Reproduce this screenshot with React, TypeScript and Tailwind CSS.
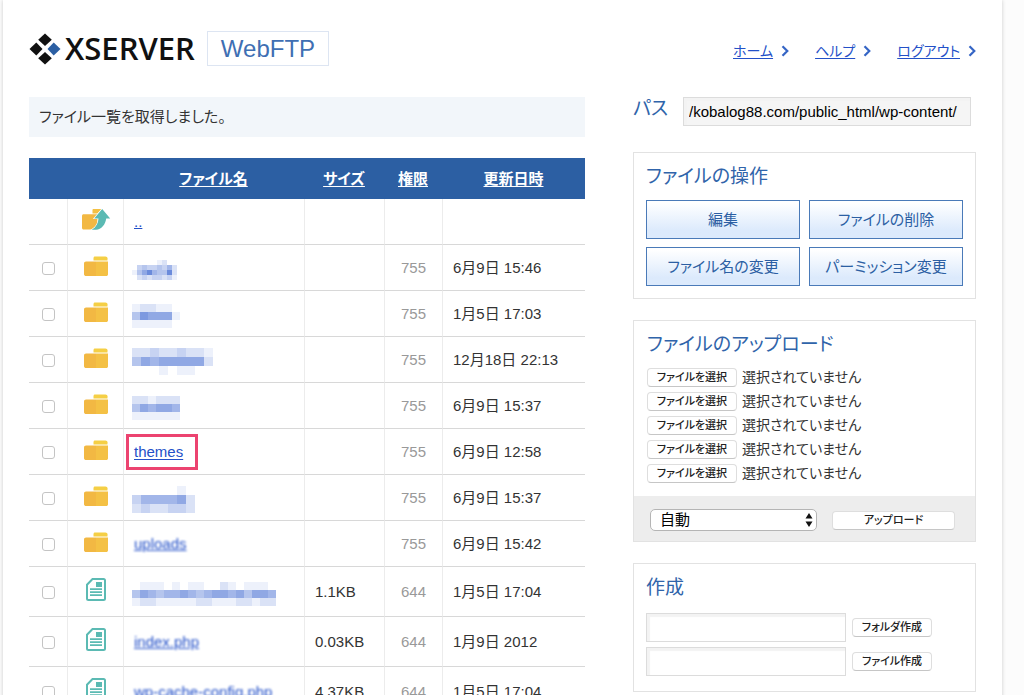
import { useRef } from "react";
import clsx from "clsx";

type MosaicData = { size: number; rows: string[] };

type Entry = {
  id: string;
  kind: "folder" | "file";
  name?: string;
  blurred?: boolean;
  marked?: boolean;
  mosaic?: MosaicData;
  size?: string;
  mode: string;
  date: string;
};

// each digit is the strength of one mosaic cell, 0 is empty
const ENTRIES: Entry[] = [
  {
    id: "d1",
    kind: "folder",
    mosaic: { size: 5, rows: ["000001200", "034334352", "146854482", "023233231"] },
    mode: "755",
    date: "6月9日 15:46",
  },
  {
    id: "d2",
    kind: "folder",
    mosaic: { size: 8, rows: ["122110", "476661", "111110"] },
    mode: "755",
    date: "1月5日 17:03",
  },
  {
    id: "d3",
    kind: "folder",
    mosaic: { size: 9, rows: ["223223221", "465666662", "000101100"] },
    mode: "755",
    date: "12月18日 22:13",
  },
  {
    id: "d4",
    kind: "folder",
    mosaic: { size: 8, rows: ["221222", "465665", "111111"] },
    mode: "755",
    date: "6月9日 15:37",
  },
  { id: "d5", kind: "folder", name: "themes", marked: true, mode: "755", date: "6月9日 12:58" },
  {
    id: "d6",
    kind: "folder",
    mosaic: { size: 9, rows: ["0000010", "3555562", "2322332"] },
    mode: "755",
    date: "6月9日 15:37",
  },
  { id: "d7", kind: "folder", name: "uploads", blurred: true, mode: "755", date: "6月9日 15:42" },
  {
    id: "f1",
    kind: "file",
    mosaic: { size: 8, rows: ["011101011002101110", "465455654566564665", "122111112211122122"] },
    size: "1.1KB",
    mode: "644",
    date: "1月5日 17:04",
  },
  { id: "f2", kind: "file", name: "index.php", blurred: true, size: "0.03KB", mode: "644", date: "1月9日 2012" },
  { id: "f3", kind: "file", name: "wp-cache-config.php", blurred: true, size: "4.37KB", mode: "644", date: "1月5日 17:04" },
];

function LogoMark() {
  return (
    <svg width="32" height="32" viewBox="0 0 32 32" aria-hidden="true">
      <path d="M16 .5l6.800 6.200L16 13 9.200 6.700z" fill="#111" />
      <path d="M7.300 9.500l6.200 6.500-6.200 6.500L.5 16z" fill="#111" />
      <path d="M16 19l6.800 6.300L16 31.500l-6.800-6.200z" fill="#111" />
      <path d="M24.700 9.500l6.800 6.500-6.800 6.500-6.200-6.500z" fill="#2c5fa3" />
    </svg>
  );
}

function FolderIcon() {
  return (
    <svg width="24" height="20" viewBox="0 0 24 20" className="block mx-auto" aria-hidden="true">
      <path d="M11 .5h10.500c1 0 2 .8 2 1.800V4.500H9.500V2c0-.9.600-1.500 1.500-1.500z" fill="#f5cf45" />
      <path d="M2 5.500h10V20H2c-1 0-2-.8-2-1.800V7.300c0-1 1-1.800 2-1.800z" fill="#f2b843" />
      <path d="M12 5.500h12v12.700c0 1-.8 1.800-1.800 1.800H12z" fill="#f4c145" />
    </svg>
  );
}

function FolderUpIcon() {
  return (
    <svg width="28" height="21" viewBox="0 0 28 21" className="block mx-auto overflow-visible" aria-hidden="true">
      <path d="M11.500 0h8l-4 4.500h-5V1.200c0-.7.400-1.200 1-1.200z" fill="#f3c044" />
      <path d="M1.500 5.300h14v9L11 20.500H1.500C.7 20.500 0 19.800 0 19V6.800c0-.8.700-1.500 1.500-1.500z" fill="#f2b843" />
      <path
        d="M20.200 0l8 9.500h-4c-.8 6-4.800 11-10.200 11.300H9.700c4.300-2.500 6.600-6.300 6.800-11.300h-4.300z"
        fill="#5bbab3"
        stroke="#fff"
        strokeWidth="1.200"
        paintOrder="stroke"
      />
    </svg>
  );
}

function FileIcon() {
  return (
    <svg width="20" height="23" viewBox="0 0 20 23" className="block mx-auto" aria-hidden="true">
      <path
        d="M6.500 1H17.500c.8 0 1.500.7 1.500 1.500v18c0 .8-.7 1.500-1.500 1.500h-15C1.700 22 1 21.300 1 20.500V6.700z"
        fill="#fff"
        stroke="#5bbab3"
        strokeWidth="2"
      />
      <path d="M10 4h6v5h-6zM4 10.300h12v1.700H4zM4 13.300h12v1.700H4zM4 16.300h12v1.800H4z" fill="#5bbab3" />
    </svg>
  );
}

function Chevron() {
  return (
    <svg width="8" height="12" viewBox="0 0 8 12" fill="none" aria-hidden="true">
      <path d="M1.500 1.200L6.300 6l-4.800 4.800" stroke="#3565c5" strokeWidth="2.200" />
    </svg>
  );
}

function Mosaic({ size, rows }: MosaicData) {
  const cols = rows[0].length;
  return (
    <svg
      width={cols * size}
      height={rows.length * size}
      viewBox={`0 0 ${cols} ${rows.length}`}
      shapeRendering="crispEdges"
      className="block"
      aria-hidden="true"
    >
      {rows.flatMap((row, y) =>
        row.split("").map((v, x) => (
          <rect key={`${x}-${y}`} x={x} y={y} width="1" height="1" fill="#3c66d0" opacity={Number(v) * 0.095} />
        ))
      )}
    </svg>
  );
}

function EntryName({ entry }: { entry: Entry }) {
  if (entry.mosaic) {
    return (
      <a href="#" aria-label="非公開の項目" className="block pt-1">
        <Mosaic {...entry.mosaic} />
      </a>
    );
  }
  if (entry.marked) {
    return (
      <div className="-ml-[6px] inline-block border-[3px] border-[#ec4370] py-[5px] pr-3 pl-[5px] align-middle">
        <a href="#" className="text-[#2350c8] underline underline-offset-2">{entry.name}</a>
      </div>
    );
  }
  return (
    <a
      href="#"
      className={clsx("pl-[2px] text-[#2350c8] underline", entry.blurred && "blur-[1px]")}
    >
      {entry.name}
    </a>
  );
}

const CELL = "border-b border-b-[#d8d8d8] border-l border-l-[#ececec]";

function FileTable() {
  return (
    <table className="mt-[21px] w-full table-fixed border-separate border-spacing-0">
      <colgroup>
        <col className="w-[38px]" />
        <col className="w-14" />
        <col className="w-[181px]" />
        <col className="w-20" />
        <col className="w-[58px]" />
        <col />
      </colgroup>
      <thead>
        <tr className="h-[41px] bg-[#2c5fa3] text-white">
          <th />
          <th />
          {["ファイル名", "サイズ", "権限", "更新日時"].map((label) => (
            <th key={label} className="p-0 font-bold">
              <a href="#" className="underline underline-offset-2">{label}</a>
            </th>
          ))}
        </tr>
      </thead>
      <tbody>
        <tr className="h-[46px]">
          <td className="border-b border-b-[#d8d8d8]" />
          <td className={clsx(CELL, "p-0 pb-1")}>
            <FolderUpIcon />
          </td>
          <td className={clsx(CELL, "py-0 pr-0 pl-[10px]")}>
            <a href="#" className="text-[#2350c8] underline">..</a>
          </td>
          <td className={CELL} />
          <td className={CELL} />
          <td className={CELL} />
        </tr>
        {ENTRIES.map((entry) => (
          <tr key={entry.id} className={entry.kind === "folder" ? "h-[46px]" : "h-[50px]"}>
            <td className="border-b border-b-[#d8d8d8] p-0 pt-px">
              <input
                type="checkbox"
                aria-label={`${entry.name ?? "項目"}を選択`}
                className="mx-auto block size-[13px] appearance-none rounded-[3px] border border-[#c4c4c4] bg-white checked:bg-[#2c5fa3]"
              />
            </td>
            <td className={clsx(CELL, "p-0 pb-1")}>
              {entry.kind === "folder" ? <FolderIcon /> : <FileIcon />}
            </td>
            <td className={clsx(CELL, "py-0 pr-0 pl-2")}>
              <EntryName entry={entry} />
            </td>
            <td className={clsx(CELL, "py-0 pr-0 pl-[10px]")}>{entry.size}</td>
            <td className={clsx(CELL, "p-0 text-center text-[#999]")}>{entry.mode}</td>
            <td className={clsx(CELL, "py-0 pr-0 pl-[10px]")}>{entry.date}</td>
          </tr>
        ))}
      </tbody>
    </table>
  );
}

const SMALL_BUTTON =
  "h-[19px] rounded-[4px] border border-[#dedede] border-b-[#c6c6c6] bg-white text-[11px] leading-[17px] font-medium text-[#222]";

function FilePicker({ index }: { index: number }) {
  const ref = useRef<HTMLInputElement>(null);

  return (
    <div className="flex h-6 items-center gap-[5px]">
      <input ref={ref} type="file" aria-label={`ファイル${index}`} className="hidden" />
      <button type="button" onClick={() => ref.current?.click()} className={clsx(SMALL_BUTTON, "w-[90px]")}>
        ファイルを選択
      </button>
      <span className="text-[14px]">選択されていません</span>
    </div>
  );
}

const HEADING = "text-[19px] leading-6 text-[#3064aa]";
const FIELD = "h-[29px] border border-[#dcdcdc] shadow-[inset_3px_3px_1px_#f3f3f3]";

function Sidebar() {
  return (
    <aside className="w-[343px] shrink-0">
      <div className="flex pr-[5px]">
        <label htmlFor="path" className={clsx(HEADING, "w-[50px]")}>パス</label>
        <input
          id="path"
          readOnly
          value="/kobalog88.com/public_html/wp-content/"
          className={clsx(FIELD, "min-w-0 flex-1 bg-[#f5f5f5] px-[5px] text-[15px] text-black")}
        />
      </div>

      <section className="mt-[26px] border border-[#e2e2e2] px-3 pt-3 pb-3">
        <h2 className={HEADING}>ファイルの操作</h2>
        <div className="mt-[11px] grid grid-cols-2 gap-x-[9px] gap-y-2">
          {["編集", "ファイルの削除", "ファイル名の変更", "パーミッション変更"].map((label) => (
            <button
              key={label}
              type="button"
              className="h-[39px] border border-[#4a7ab8] bg-linear-to-b from-white from-5% to-[#dceafc] to-80% text-[#2c5fa3]"
            >
              {label}
            </button>
          ))}
        </div>
      </section>

      <section className="mt-[21px] border border-[#e2e2e2]">
        <div className="px-[13px] pt-3 pb-[11px]">
          <h2 className={HEADING}>ファイルのアップロード</h2>
          <div className="mt-2">
            {[1, 2, 3, 4, 5].map((n) => (
              <FilePicker key={n} index={n} />
            ))}
          </div>
        </div>
        <div className="flex items-center gap-[15px] bg-[#ededed] pt-[13px] pr-5 pb-[10px] pl-4">
          <div className="relative w-[167px]">
            <select
              aria-label="文字コード"
              className="block h-[22px] w-full appearance-none rounded-[5px] border border-[#b5b5b5] bg-white pl-[9px] text-[15px] leading-5 text-black"
            >
              <option>自動</option>
            </select>
            <svg
              width="8"
              height="14"
              viewBox="0 0 8 14"
              className="pointer-events-none absolute top-1 right-1"
              aria-hidden="true"
            >
              <path d="M4 0l3.500 5.500h-7zM4 14L.5 8.500h7z" fill="#111" />
            </svg>
          </div>
          <button type="button" className={clsx(SMALL_BUTTON, "flex-1")}>アップロード</button>
        </div>
      </section>

      <section className="mt-[21px] border border-[#e2e2e2] px-3 pt-3 pb-[15px]">
        <h2 className={HEADING}>作成</h2>
        <div className="mt-[13px] space-y-[5px]">
          {["フォルダ作成", "ファイル作成"].map((label) => (
            <div key={label} className="flex items-center gap-[6px]">
              <input type="text" aria-label={label} className={clsx(FIELD, "w-[200px] bg-white px-[5px]")} />
              <button type="button" className={clsx(SMALL_BUTTON, "w-20")}>{label}</button>
            </div>
          ))}
        </div>
      </section>
    </aside>
  );
}

export default function App() {
  return (
    <div className="h-screen overflow-hidden bg-[#fcfcfc] pr-[22px] pl-[3px] font-['Liberation_Sans','Noto_Sans_CJK_JP',sans-serif] text-[15px] leading-5 text-[#333] [font-feature-settings:'palt']">
      <div className="min-h-full bg-white px-[26px] pt-[31px] shadow-[0_0_4px_rgba(0,0,0,0.2)]">
        <header className="flex h-[35px] items-center">
          <LogoMark />
          <span className="ml-1 font-['Open_Sans',sans-serif] text-[31px] leading-[33px] font-semibold text-[#111]">
            XSERVER
          </span>
          <h1 className="ml-3 border border-[#dde5f2] px-[13px] text-[24px] leading-[33px] text-[#3f6fb3]">WebFTP</h1>
          <nav className="ml-auto flex gap-[26px] pt-1 text-[14px]">
            {["ホーム", "ヘルプ", "ログアウト"].map((label) => (
              <a key={label} href="#" className="flex items-center gap-2 text-[#2350c8]">
                <span className="underline underline-offset-2">{label}</span>
                <Chevron />
              </a>
            ))}
          </nav>
        </header>

        <div className="mt-[31px] flex items-start gap-12">
          <main className="min-w-0 flex-1">
            <p className="bg-[#f2f6fa] px-[10px] py-[10px]">ファイル一覧を取得しました。</p>
            <FileTable />
          </main>
          <Sidebar />
        </div>
      </div>
    </div>
  );
}
